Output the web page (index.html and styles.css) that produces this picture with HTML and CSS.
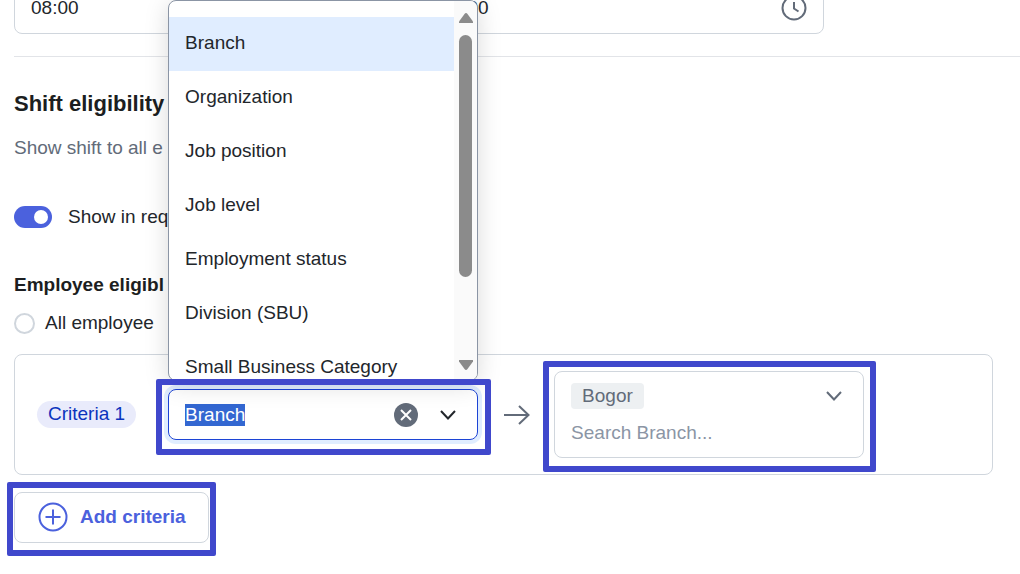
FILE: index.html
```
<!DOCTYPE html>
<html lang="en">
<head>
    <meta charset="UTF-8">
    <meta name="viewport" content="width=device-width, initial-scale=1.0">
    <title>Shift eligibility</title>
    <link rel="stylesheet" href="styles.css">
</head>
<body>
    <main class="page">
        <!-- shift hours -->
        <div class="time-row">
            <div class="time-field">
                <input type="text" class="text-input" value="08:00" aria-label="Start time">
            </div>
            <div class="time-field">
                <input type="text" class="text-input" value="17:00" aria-label="End time">
                <svg class="clock" width="26" height="26" viewBox="0 0 26 26">
                    <circle cx="13" cy="13" r="11.5"/>
                    <path d="M13 7v6.500l4.500 3"/>
                </svg>
            </div>
        </div>
        <hr class="divider">

        <h2 class="section-title">Shift eligibility</h2>
        <p class="section-text">Show shift to all e</p>

        <label class="option toggle-option">
            <input type="checkbox" class="toggle" checked>
            <span>Show in req</span>
        </label>

        <h3 class="group-title">Employee eligibl</h3>
        <label class="option radio-option">
            <input type="radio" class="radio" name="eligible">
            <span>All employee</span>
        </label>

        <!-- criteria -->
        <div class="criteria-card">
            <span class="criteria-label">Criteria 1</span>

            <div class="field criteria-select marked">
                <input type="text" id="criteria-input" class="text-input" value="Branch" aria-label="Criteria">
                <button type="button" class="icon-button" aria-label="Clear">
                    <svg width="24" height="24" viewBox="0 0 24 24">
                        <circle cx="12" cy="12" r="12" fill="#626b79"/>
                        <path d="M7 7l10 10M17 7L7 17" stroke="#fff"/>
                    </svg>
                </button>
                <button type="button" class="icon-button" aria-label="Toggle options">
                    <svg width="16" height="16" viewBox="0 0 16 16">
                        <path d="M1 4l7 7.500L15 4" stroke="#22262b"/>
                    </svg>
                </button>

                <div class="menu">
                    <ul class="menu-list">
                        <li class="menu-item active">Branch</li>
                        <li class="menu-item">Organization</li>
                        <li class="menu-item">Job position</li>
                        <li class="menu-item">Job level</li>
                        <li class="menu-item">Employment status</li>
                        <li class="menu-item">Division (SBU)</li>
                        <li class="menu-item">Small Business Category</li>
                    </ul>
                    <div class="scrollbar">
                        <svg width="14" height="10" viewBox="0 0 14 10"><path d="M5.500 1Q7-1 8.500 1L14 8.500V10H0V8.500z"/></svg>
                        <div class="scroll-track">
                            <div class="scroll-thumb"></div>
                        </div>
                        <svg width="14" height="10" viewBox="0 0 14 10"><path d="M0 0H14V1.500L8.500 9Q7 11 5.500 9L0 1.500z"/></svg>
                    </div>
                </div>
            </div>

            <svg class="arrow" width="26" height="20" viewBox="0 0 26 20">
                <path d="M0 10h24M15 1l9.500 9-9.500 9"/>
            </svg>

            <div class="field value-select marked">
                <div class="value-body">
                    <span class="tag">Bogor</span>
                    <input type="text" class="text-input" placeholder="Search Branch..." aria-label="Search branch">
                </div>
                <button type="button" class="icon-button" aria-label="Toggle branches">
                    <svg width="16" height="16" viewBox="0 0 16 16">
                        <path d="M1 4l7 7.500L15 4" stroke="#626b79"/>
                    </svg>
                </button>
            </div>
        </div>

        <button type="button" class="add-button marked">
            <svg width="30" height="30" viewBox="0 0 30 30">
                <circle cx="15" cy="15" r="13.500"/>
                <path d="M15 7.500v15M7.500 15h15"/>
            </svg>
            Add criteria
        </button>
    </main>

    <script>
        const criteriaInput = document.getElementById('criteria-input');
        criteriaInput.focus({ preventScroll: true });
        criteriaInput.select();
    </script>
</body>
</html>
```

FILE: styles.css
```
* {
    box-sizing: border-box;
}

body {
    margin: 0;
    font-family: "Liberation Sans", Arial, sans-serif;
    font-size: 19px;
    line-height: 24px;
    color: #22262b;
    background-color: #fff;
}

button,
input {
    font: inherit;
    color: inherit;
}

button {
    cursor: pointer;
}

svg {
    display: block;
    flex-shrink: 0;
    fill: none;
    stroke-width: 2;
}

.page {
    margin-top: -18px;
    padding: 0 0 30px 14px;
}

.time-row {
    display: flex;
    gap: 10px;
    max-width: 810px;
}

.time-field {
    flex: 1;
    display: flex;
    align-items: center;
    height: 52px;
    padding: 0 16px;
    border: 1px solid #d0d6dd;
    border-radius: 8px;
}

.text-input {
    flex: 1;
    min-width: 0;
    padding: 0;
    border: none;
    outline: none;
    line-height: 22px;
    background: none;
}

.text-input::placeholder {
    color: #8b95a5;
    opacity: 1;
}

.text-input::selection {
    color: #fff;
    background-color: #3367d1;
}

.clock {
    stroke: #626b79;
}

.divider {
    height: 1px;
    margin: 22px 0 0;
    border: none;
    background-color: #e2e4e8;
}

.section-title {
    margin: 35px 0 0;
    font-size: 22px;
    line-height: 24px;
    color: #1c1e21;
}

.section-text {
    margin: 20px 0 0;
    color: #626b79;
}

.group-title {
    margin: 44px 0 0;
    font-size: 19px;
    color: #1c1e21;
}

.option {
    display: flex;
    align-items: center;
}

.toggle-option {
    gap: 16px;
    margin-top: 45px;
}

.radio-option {
    gap: 10px;
    margin-top: 14px;
}

.toggle {
    appearance: none;
    display: flex;
    justify-content: flex-end;
    width: 38px;
    height: 22px;
    margin: 0;
    padding: 4px;
    border-radius: 11px;
    background-color: #4b61dd;
}

.toggle::before {
    content: "";
    width: 14px;
    height: 14px;
    border-radius: 50%;
    background-color: #fff;
}

.radio {
    appearance: none;
    width: 21px;
    height: 21px;
    margin: 0;
    border: 2px solid #d0d6dd;
    border-radius: 50%;
}

.criteria-card {
    display: flex;
    align-items: center;
    margin: 19px 27px 0 0;
    padding: 16px 22px;
    border: 1px solid #d0d6dd;
    border-radius: 8px;
}

.criteria-label {
    margin-right: 32px;
    padding: 0 11px 2px;
    border-radius: 14px;
    line-height: 25px;
    white-space: nowrap;
    color: #0b33bd;
    background-color: #e9ebfb;
}

.field {
    flex: 0 1 310px;
    display: flex;
    min-width: 0;
    padding: 0 21px 0 16px;
    border: 1px solid #d0d6dd;
    border-radius: 8px;
}

.criteria-select {
    align-items: center;
    gap: 22px;
    height: 51px;
    border-color: #1c44d5;
    box-shadow: 0 0 0 4px #e0edff;
}

.value-select {
    align-items: flex-start;
    padding-top: 11px;
    padding-bottom: 13px;
}

.value-body {
    flex: 1;
    display: flex;
    flex-direction: column;
    align-items: flex-start;
    gap: 13px;
    min-width: 0;
}

.value-select .icon-button {
    margin-top: 5px;
}

.icon-button {
    padding: 0;
    border: none;
    background: none;
}

.tag {
    padding: 0 11px;
    border-radius: 4px;
    line-height: 26px;
    color: #626b79;
    background-color: #edf0f2;
}

.arrow {
    margin: 0 24px 0 26px;
    stroke: #626b79;
}

/* callout frame */
.marked {
    position: relative;
}

.marked::after {
    content: "";
    position: absolute;
    inset: -11px -13px -15px -12px;
    z-index: 3;
    border: 6px solid #4048cc;
    border-radius: 2px;
    pointer-events: none;
}

.criteria-select::after {
    inset: -11px -14px -16px -13px;
}

.menu {
    position: absolute;
    bottom: calc(100% + 9px);
    left: -1px;
    right: -1px;
    z-index: 2;
    display: flex;
    height: 381px;
    overflow: hidden;
    border: 1px solid #8b95a5;
    border-radius: 8px;
    background-color: #fff;
    box-shadow: 0 4px 24px rgba(0, 0, 0, 0.15);
}

.menu-list {
    flex: 1;
    margin: 0;
    padding: 16px 0 0;
    list-style: none;
}

.menu-item {
    padding: 14px 16px 16px;
}

.menu-item.active {
    background-color: #e0edff;
}

.scrollbar {
    display: flex;
    flex-direction: column;
    align-items: center;
    width: 23px;
    padding: 12px 0 10px;
    fill: #8b8b8b;
    background-color: #fafafa;
}

.scrollbar svg {
    fill: inherit;
}

.scroll-track {
    flex: 1;
    padding-top: 12px;
}

.scroll-thumb {
    width: 13px;
    height: 242px;
    border-radius: 7px;
    background-color: #8b8b8b;
}

.add-button {
    display: flex;
    align-items: center;
    gap: 12px;
    margin-top: 17px;
    padding: 9px 22px 10px 23px;
    border: 1px solid #d0d6dd;
    border-radius: 8px;
    font-weight: bold;
    color: #4b61dd;
    background-color: #fff;
}

.add-button svg {
    stroke: #4b61dd;
}

.add-button::after {
    inset: -11px -8px -14px -8px;
}
```
